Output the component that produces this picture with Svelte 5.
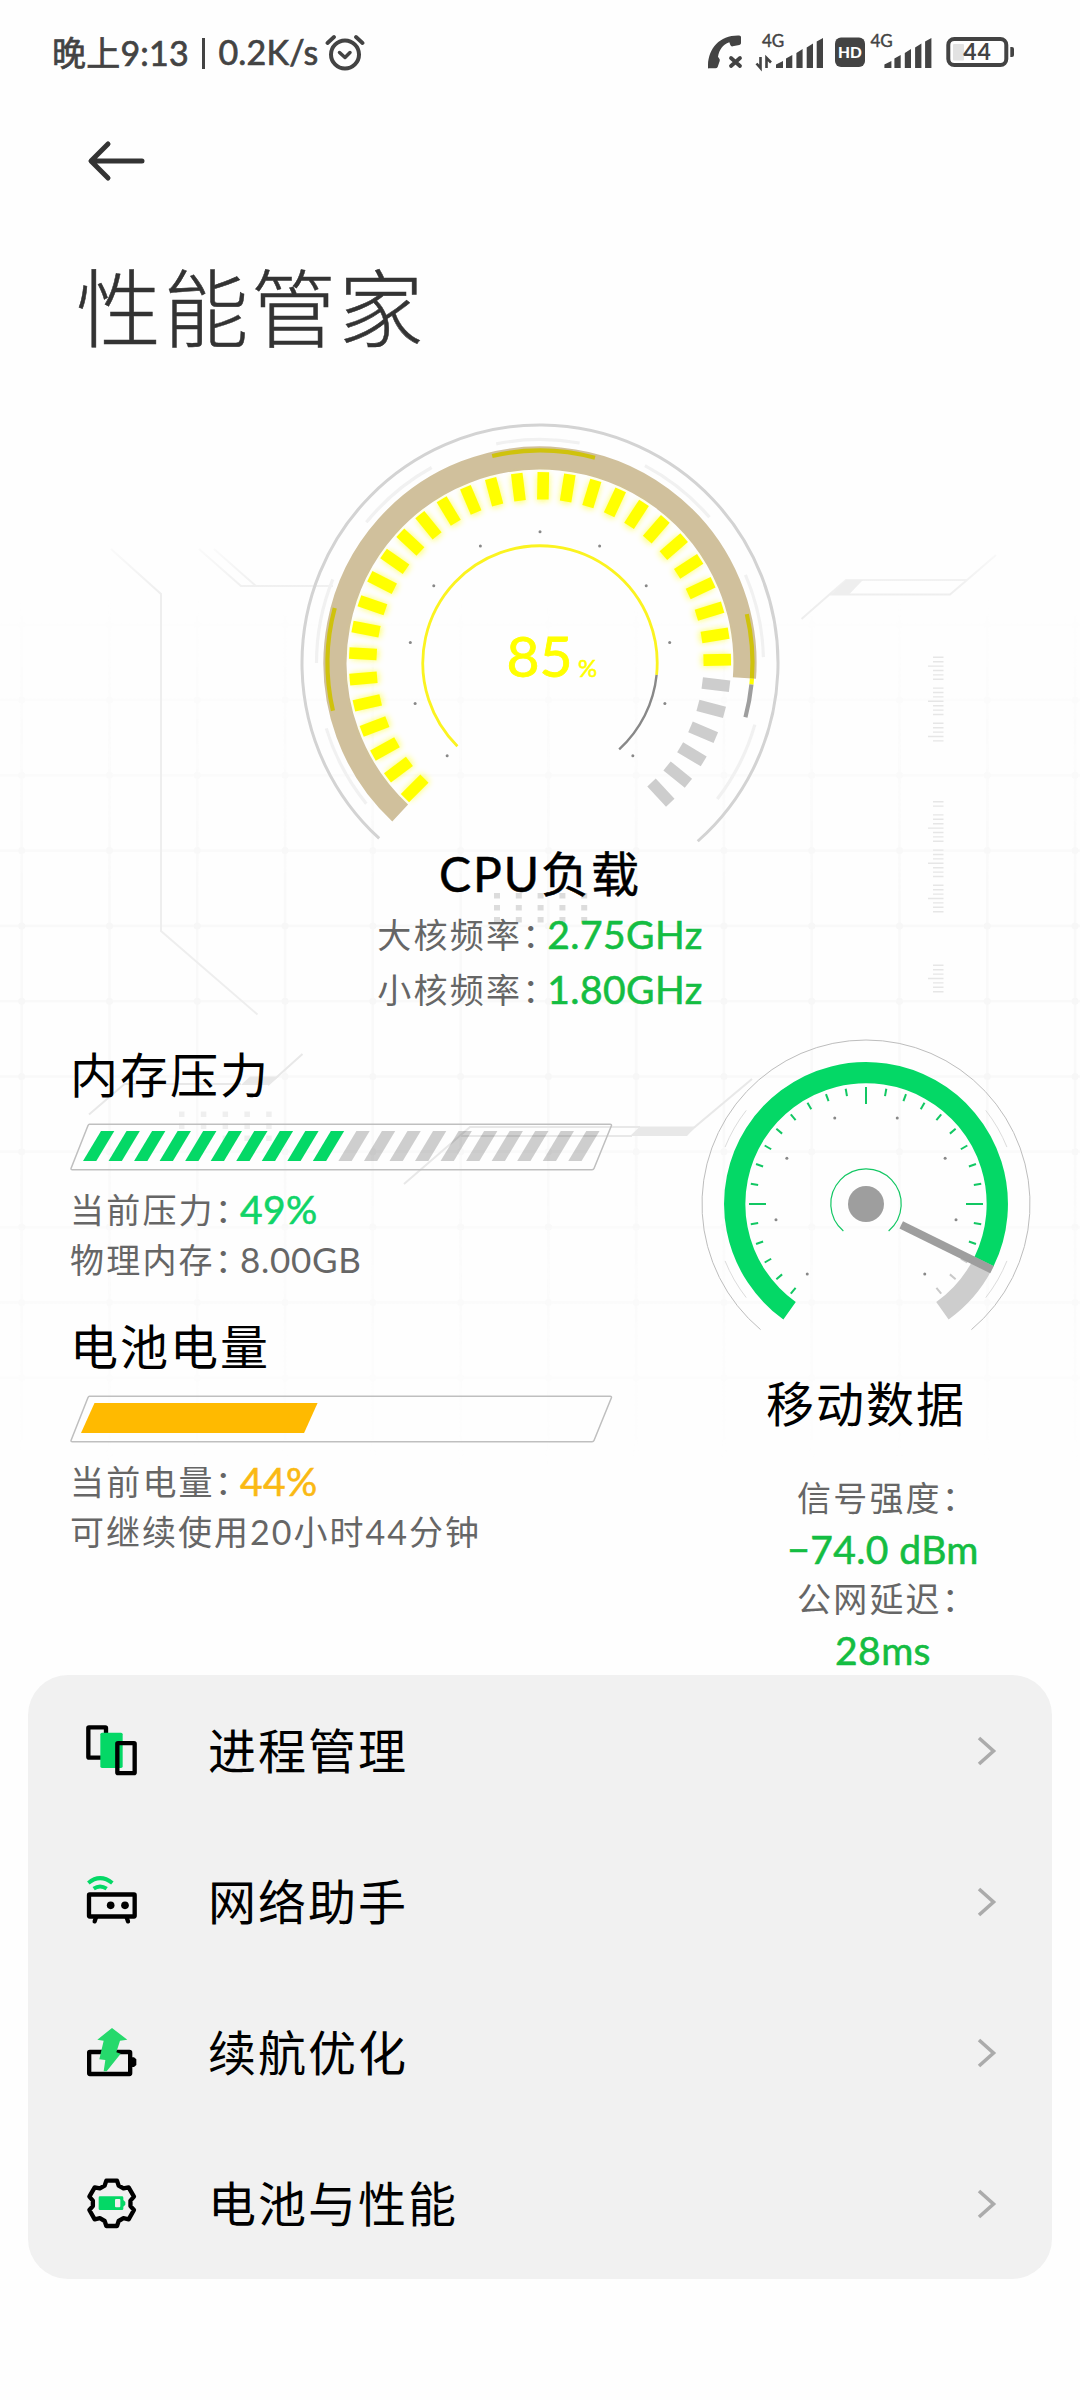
<script lang="ts">
  const cpuLoad = 85;
  const memory = 49;
  const battery = 44;

  const point = (r: number, deg: number) => {
    const a = (deg * Math.PI) / 180;
    return `${(r * Math.cos(a)).toFixed(2)} ${(r * Math.sin(a)).toFixed(2)}`;
  };

  const arc = (r: number, from: number, to: number) =>
    `M${point(r, from)}A${r} ${r} 0 ${to - from > 180 ? 1 : 0} 1 ${point(r, to)}`;

  const spoke = (r1: number, r2: number, deg: number) =>
    `M${point(r1, deg)}L${point(r2, deg)}`;

  const range = (n: number) => Array.from({ length: n }, (_, i) => i);

  // cpu gauge
  const cpuTicks = range(35).map((i) => 135 + i * 8);
  const cpuDots = range(11).map((i) => -225 + i * 27);
  const faintArcs = [
    [141, 163],
    [180, 202],
    [219, 241],
    [258.7, 280.2],
    [298, 319.3],
    [336.8, 358.5],
    [16, 37.5],
  ];

  // network gauge
  const needle = 26;
  const netTicks = range(29).map((i) => -230 + i * 10);
  const netDots = [-230, -190, -150, -110, -70, -30, 10, 50];
  const netFaint = [
    [142, 158],
    [202, 218],
    [322, 338],
    [22, 38],
  ];

  const gridX = range(13).map((i) => 21.7 + i * 87.78);
  const gridY = range(12).map((i) => 624.7 + i * 75.3);

  // [first y, number of marks, offset of the first long mark]
  const rulers = [
    [657.3, 20, 2],
    [801.7, 26, 6],
    [965.3, 7, 3],
  ];
  const rulerPath = rulers
    .map(([y, n, long]) =>
      range(n)
        .filter((i) => (i - long + 16) % 8 !== 4)
        .map((i) => `M${(i - long) % 8 === 0 ? 928 : 933} ${(y + i * 4.4).toFixed(1)}H943.5`)
        .join("")
    )
    .join("");

  const stripes = range(20).map((i) => 13 + i * 25.54);
  const gear =
    range(6)
      .map((k) => {
        const a = (k * Math.PI) / 3;
        return [[-21, -53], [-16, -68], [16, -68], [21, -53]]
          .map(([x, y]) => `${(x * Math.cos(a) - y * Math.sin(a)).toFixed(1)} ${(x * Math.sin(a) + y * Math.cos(a)).toFixed(1)}`)
          .join("L");
      })
      .join("L");

  const menu = [
    { id: "process", label: "进程管理" },
    { id: "network", label: "网络助手" },
    { id: "endurance", label: "续航优化" },
    { id: "power", label: "电池与性能" },
  ];
</script>

<div class="page">
  <svg class="backdrop" viewBox="0 0 1080 2400">
    <defs>
      <linearGradient id="fade" x1="0" y1="590" x2="0" y2="1470" gradientUnits="userSpaceOnUse">
        <stop offset="0" stop-color="#fff" stop-opacity="0" />
        <stop offset="0.35" stop-color="#fff" />
        <stop offset="0.6" stop-color="#fff" />
        <stop offset="1" stop-color="#fff" stop-opacity="0" />
      </linearGradient>
      <linearGradient id="fadeTop" x1="0" y1="545" x2="0" y2="595" gradientUnits="userSpaceOnUse">
        <stop offset="0" stop-color="#eee" stop-opacity="0.2" />
        <stop offset="1" stop-color="#eee" />
      </linearGradient>
      <mask id="gridMask" maskUnits="userSpaceOnUse" x="0" y="590" width="1080" height="880">
        <rect y="590" width="1080" height="880" fill="url(#fade)" />
      </mask>
    </defs>
    <g mask="url(#gridMask)" stroke="#f9f9f9" stroke-width="2.6">
      {#each gridX as x}
        <path d="M{x} 600V1470" />
      {/each}
      {#each gridY as y}
        <path d="M0 {y}H1080" />
        {#each gridX as x}
          <circle cx={x} cy={y} r="3.5" fill="#f7f7f7" stroke="none" />
        {/each}
      {/each}
    </g>
    <g fill="none" stroke="url(#fadeTop)" stroke-width="2">
      <path d="M111 549L161 594V931L257.5 1014.5" />
      <path d="M199 549L241 586L333 586.1M214 549L256 586" />
      <path d="M801.5 619L846 580L967 580.1L996 555M830 594.5L950 594.6L967 580" />
    </g>
    <path d="M831 594.5L846 580H863L849 594.5Z" fill="#eee" />
    <path d={rulerPath} stroke="#e6e6e6" stroke-width="1.4" />
    <g fill="#dcdcdc">
      {#each range(15) as i}
        <rect x={494 + (i % 5) * 21.8} y={893 + Math.floor(i / 5) * 12} width="6" height="5.5" />
      {/each}
    </g>
    <g fill="#efefef">
      {#each range(15) as i}
        <rect x={179 + (i % 5) * 21.8} y={1111.5 + Math.floor(i / 5) * 12} width="5.5" height="5.5" />
      {/each}
    </g>
    <g fill="none" stroke="#e8e8e8" stroke-width="2">
      <path d="M89 1114.5L124.5 1084H241M268 1085L302.5 1054" />
      <path d="M404 1184L470 1127H640M461 1136H632" />
      <path d="M690 1131L752 1079" />
    </g>
    <path d="M241 1085L250 1076.5H279L268 1085ZM630 1136L640 1126.5H696L687 1136Z" fill="#e8e8e8" />
  </svg>

  <header class="status">
    <div class="status-left">
      <span class="status-text">晚上9:13<i></i>0.2K/s</span>
      <svg class="alarm" viewBox="0 0 40 38">
        <g fill="none" stroke="#434343" stroke-linecap="round" stroke-linejoin="round">
          <circle cx="20" cy="21.5" r="14" stroke-width="4" />
          <path d="M14.5 19.5L20 24.5L25 19.5" stroke-width="3.5" />
          <path d="M2.5 10L9 4M37.5 10L31 4" stroke-width="3.8" />
        </g>
      </svg>
    </div>
    <svg class="status-icons" viewBox="0 -10 310 50">
      <g fill="#434343">
        <path
          transform="scale(.3333) translate(-84 -75)"
          d="M84 174C82 118 118 74 180 77Q183 77 183 82V100Q183 104 178 105L158 109Q153 110 151 105L148 97C128 104 118 120 114 140L119 148Q120 152 118 156L113 171Q111 175 106 175H88Q84 176 84 174Z"
        />
        <path d="M23 23L32 31M32 23L23 31" stroke="#434343" stroke-width="3.8" stroke-linecap="round" />
        <path d="M52.5 22V33L48.5 28.5M58.5 33V23L63 27.5" fill="none" stroke="#434343" stroke-width="2.6" />
        <text class="net" x="54" y="12.3">4G</text>
        <text class="net" x="162.5" y="12.3">4G</text>
        {#each [0, 108.4] as x}
          <path
            transform="translate({x} 0)"
            d="M68 33V29.5L75 26V33ZM78 33V23.5L84.3 20V33ZM88.4 33V18L94.6 14V33ZM98.7 33V12.5L105 8.5V33ZM108.7 33V6.5L115 3V33Z"
          />
        {/each}
        <rect x="127" y="2.5" width="30" height="29.5" rx="6" />
        <text class="hd" x="142" y="23">HD</text>
        <rect x="245" y="9" width="11" height="16.5" rx="1" fill="#e2e2e2" />
        <rect x="240.3" y="4" width="58" height="26" rx="6" fill="none" stroke="#434343" stroke-width="4" />
        <path d="M302.3 12H304Q306 12 306 14V20Q306 22 304 22H302.3Z" />
        <text class="level" x="269.5" y="25.2">{battery}</text>
      </g>
    </svg>
  </header>

  <nav>
    <svg class="back" viewBox="0 0 60 42">
      <path d="M55 21H5M21 4L4 21L21 38" fill="none" stroke="#333" stroke-width="5" stroke-linecap="round" stroke-linejoin="round" />
    </svg>
    <h1>性能管家</h1>
  </nav>

  <section class="cpu">
    <svg class="cpu-gauge" viewBox="-240 -240 480 422">
      <defs>
        <filter id="glow" x="-20%" y="-20%" width="140%" height="140%">
          <feGaussianBlur stdDeviation="3" />
        </filter>
      </defs>
      <g fill="none">
        <path d={arc(238, 132.5, 408.5)} stroke="#d3d3d3" stroke-width="3" />
        {#each faintArcs as [a, b]}
          <path d={arc(223.5, a, b)} stroke="#f1f1f1" stroke-width="3.2" />
        {/each}
        <path d={arc(205, 133, 364.2)} stroke="#d0c09c" stroke-width="23.2" />
        {#each [[167, 195], [257, 285], [346.7, 364.2]] as [a, b]}
          <path d={arc(212.5, a, b)} stroke="#cfc20d" stroke-width="4.2" />
        {/each}
        <path d={arc(212.5, 364.2, 365.8)} stroke="#ff0" stroke-width="4.2" />
        <path d={arc(212.5, 365.8, 374.8)} stroke="#9e9e9e" stroke-width="4.2" />
        <g stroke="#ff0" stroke-width="12" opacity="0.6" filter="url(#glow)">
          {#each cpuTicks.slice(0, 29) as a}
            <path d={spoke(162, 189, a)} />
          {/each}
        </g>
        {#each cpuTicks as a, i}
          <path d={spoke(163.5, 191, a)} stroke={i < 29 ? "#ff0" : "#cdcdcd"} stroke-width="11.6" />
        {/each}
        <path d={arc(117.2, 134.8, 365.8)} stroke="#fbf320" stroke-width="2.8" />
        <path d={arc(117.2, 365.8, 407.5)} stroke="#888" stroke-width="2.4" />
      </g>
      {#each cpuDots as a}
        <circle r="1.5" transform="translate({point(131.3, a)})" fill="#888" />
      {/each}
      <text class="load" x="-33.5" y="14.3">{cpuLoad}</text>
      <text class="load-unit" x="38" y="14.3">%</text>
    </svg>
    <h2>CPU负载</h2>
    <p class="freq"><span class="label">大核频率：</span><b class="green">2.75GHz</b></p>
    <p class="freq"><span class="label">小核频率：</span><b class="green">1.80GHz</b></p>
  </section>

  <section class="panels">
    <div class="meters">
      <div class="meter">
        <h2>内存压力</h2>
        <svg class="bar" viewBox="0 0 544 48">
          <path d="M19.5 1.2H540Q542 1.2 541.3 3L524 45.5Q523.5 46.8 522 46.8H2.5Q.5 46.8 1.2 45L18 2.5Q18.5 1.2 19.5 1.2Z" fill="none" stroke="#bfbfbf" stroke-width="1.5" />
          {#each stripes as x, i}
            <path d="M{x} 38L{x + 18} 8H{x + 31.3}L{x + 13.3} 38Z" fill={i * 5 < memory ? "#04d866" : "rgba(0, 0, 0, .19)"} />
          {/each}
        </svg>
        <p><span class="label">当前压力：</span><b class="bright">{memory}%</b></p>
        <p><span class="label">物理内存：</span><span class="size">8.00GB</span></p>
      </div>
      <div class="meter">
        <h2>电池电量</h2>
        <svg class="bar" viewBox="0 0 544 48">
          <path d="M19.5 1.2H540Q542 1.2 541.3 3L524 45.5Q523.5 46.8 522 46.8H2.5Q.5 46.8 1.2 45L18 2.5Q18.5 1.2 19.5 1.2Z" fill="none" stroke="#bfbfbf" stroke-width="1.5" />
          <path d="M11 38L24.5 8H{24.5 + battery * 5.07}L{11 + battery * 5.07} 38Z" fill="#ffba00" />
        </svg>
        <p><span class="label">当前电量：</span><b class="amber">{battery}%</b></p>
        <p class="label remain">可继续使用20小时44分钟</p>
      </div>
    </div>

    <div class="network">
      <svg class="net-gauge" viewBox="-166 -166 332 300">
        <g fill="none">
          <path d={arc(164, 130, 410)} stroke="#bdbdbd" />
          {#each netFaint as [a, b]}
            <path d={arc(152, a, b)} stroke="#dcdcdc" />
          {/each}
          <path d={arc(131.3, needle, 54.4)} stroke="#cdcdcd" stroke-width="21.3" />
          <path d={arc(131.3, 125.6, 360 + needle)} stroke="#04d866" stroke-width="21.3" />
          {#each netTicks as a}
            <path
              d={spoke(a % 90 === 0 ? 100 : 109.5, 117, a)}
              stroke={a < needle ? "#12c763" : "#c9c9c9"}
              stroke-width="2"
            />
          {/each}
          <path d={arc(35.2, 130, 410)} stroke="#12c763" stroke-width="1.2" />
          <path d="M35.2 20.8L126 65.7" stroke="#9e9e9e" stroke-width="8" />
        </g>
        {#each netDots as a}
          <circle r="1.5" transform="translate({point(91.4, a)})" fill="#888" />
        {/each}
        <circle r="18" fill="#9e9e9e" />
      </svg>
      <h2>移动数据</h2>
      <dl>
        <dt class="label">信号强度：</dt>
        <dd class="green">−74.0 dBm</dd>
        <dt class="label">公网延迟：</dt>
        <dd class="green">28ms</dd>
      </dl>
    </div>
  </section>

  <ul class="menu">
    {#each menu as item}
      <li>
        <svg class="icon" viewBox="0 0 153 153">
          {#if item.id === "process"}
            <rect x="7" y="7" width="53" height="91" rx="2" fill="none" stroke="#000" stroke-width="13" />
            <rect x="43" y="23" width="67" height="106" rx="5" fill="#04d866" />
            <rect x="94" y="54.5" width="52" height="90" rx="2" fill="none" stroke="#000" stroke-width="13" />
          {:else if item.id === "network"}
            <g fill="none" stroke="#04d866" stroke-width="12">
              <path d="M7 21Q42 -8 79 21" />
              <path d="M23 38Q42 25 62 38" />
            </g>
            <rect x="9" y="55.5" width="137" height="66" rx="2" fill="none" stroke="#000" stroke-width="13" />
            <path d="M30 124L26 136M122 124L126 136" stroke="#000" stroke-width="13" stroke-linecap="round" />
            <circle cx="74" cy="88" r="11.5" />
            <circle cx="117" cy="88" r="11.5" />
          {:else if item.id === "endurance"}
            <rect x="9.5" y="75" width="123" height="66" rx="2" fill="none" stroke="#000" stroke-width="13" />
            <path d="M138 91H144L151 97V114L144 120H138Z" />
            <path d="M78 3L124 38L102 41L91 76L104 80L62 133H53L58 99L40 97L53 41L34 38Z" fill="#26d96c" />
          {:else}
            <path transform="translate(77 76)" d="M{gear}Z" fill="none" stroke="#000" stroke-width="13" stroke-linejoin="round" />
            <path d="M42 55H108Q112 55 112 59V66L118 72V80L112 86V92Q112 96 108 96H42Q38 96 38 92V59Q38 55 42 55Z" fill="#04d866" />
            <rect x="87" y="63" width="16" height="25" rx="3" fill="#f1f1f1" />
          {/if}
        </svg>
        <span>{item.label}</span>
        <svg class="chevron" viewBox="0 0 20 30">
          <path d="M2 2L16.5 15L2 28" fill="none" stroke="#ababab" stroke-width="3.6" />
        </svg>
      </li>
    {/each}
  </ul>
</div>

<style>
  :global(body) {
    margin: 0;
    background: #fefefe;
  }

  .page {
    position: relative;
    width: 1080px;
    height: 2400px;
    overflow: hidden;
    background: #fefefe;
    color: #000;
    font-family: Lato, "Noto Sans CJK SC", sans-serif;
  }

  .page > :not(.backdrop) {
    position: relative;
  }

  .backdrop {
    position: absolute;
    inset: 0;
    width: 1080px;
    height: 2400px;
  }

  svg {
    display: block;
    flex: none;
  }

  h1,
  h2,
  p,
  ul,
  dl,
  dd {
    margin: 0;
    padding: 0;
  }

  .status {
    display: flex;
    justify-content: space-between;
    align-items: flex-start;
    height: 105px;
    padding: 0 62px 0 52px;
    box-sizing: border-box;
  }

  .status-left {
    display: flex;
    align-items: center;
    height: 106px;
  }

  .status-text {
    display: flex;
    align-items: center;
    padding-bottom: 4px;
    font-size: 34px;
    letter-spacing: 0.2px;
    color: #434343;
    -webkit-text-stroke: 0.7px #434343;
  }

  .status-text i {
    width: 3.5px;
    height: 31px;
    margin: 4px 13px 0 13px;
    background: #434343;
  }

  .alarm {
    width: 40px;
    height: 38px;
    margin: -2px 0 0 7px;
  }

  .status-icons {
    width: 310px;
    height: 50px;
    margin-top: 25px;
  }

  .net {
    font-size: 17px;
    stroke: #434343;
    stroke-width: 0.4px;
  }

  .hd {
    font-size: 15.5px;
    font-weight: 900;
    fill: #fff;
    text-anchor: middle;
  }

  .level {
    font-size: 23px;
    font-weight: 700;
    letter-spacing: 0.8px;
    text-anchor: middle;
  }

  nav {
    height: 318px;
  }

  .back {
    width: 60px;
    height: 42px;
    padding: 35px 0 0 87px;
  }

  h1 {
    padding: 66px 0 0 76px;
    font-size: 85px;
    line-height: 120px;
    font-weight: 300;
    letter-spacing: 2.5px;
    color: #333;
    -webkit-text-stroke: 0.5px #333;
  }

  h2 {
    font-size: 48px;
    line-height: 50px;
    font-weight: 400;
    letter-spacing: 2px;
  }

  .cpu {
    display: flex;
    flex-direction: column;
    align-items: center;
    height: 603px;
  }

  .cpu-gauge {
    width: 480px;
    height: 422px;
  }

  .load {
    font-size: 57px;
    fill: #ff0;
    stroke: #ff0;
    stroke-width: 0.8px;
  }

  .load-unit {
    font-size: 24px;
    fill: #ff0;
    stroke: #ff0;
    stroke-width: 0.6px;
  }

  .cpu h2 {
    margin-top: 4px;
    -webkit-text-stroke: 0.5px #000;
  }

  p {
    display: flex;
    align-items: center;
    line-height: 49px;
  }

  .freq {
    line-height: 55px;
  }

  .cpu h2 + .freq {
    margin-top: 8px;
  }

  .label,
  .size {
    font-size: 34px;
    letter-spacing: 2.2px;
    color: #666;
    font-feature-settings: "halt";
  }

  p .label + * {
    margin-left: 6px;
  }

  .size {
    font-size: 35px;
    letter-spacing: 0.7px;
  }

  .green,
  .bright,
  .amber {
    font-size: 39px;
    font-weight: 400;
    letter-spacing: 0.4px;
    -webkit-text-stroke: 0.6px currentColor;
  }

  .green {
    color: #14bd42;
  }

  .bright {
    color: #10d468;
  }

  .amber {
    color: #fab913;
  }

  .panels {
    display: flex;
    height: 649px;
  }

  .meters {
    width: 614px;
    padding: 24px 0 0 70px;
  }

  .meter {
    height: 272px;
  }

  .meter p {
    line-height: 49.5px;
  }

  .bar {
    width: 544px;
    height: 48px;
    margin: 23px 0 14px;
  }

  .remain {
    letter-spacing: 2px;
  }

  .network {
    display: flex;
    flex-direction: column;
    align-items: center;
    width: 364px;
    padding-top: 12px;
  }

  .net-gauge {
    width: 332px;
    height: 300px;
  }

  .network h2 {
    margin-top: 41px;
  }

  dl {
    width: 360px;
    margin-top: 44px;
    text-align: center;
    line-height: 50.6px;
  }

  dt {
    padding-left: 26px;
  }

  dd {
    padding-left: 34px;
    letter-spacing: 0.9px;
  }

  .menu {
    display: flex;
    flex-direction: column;
    width: 1024px;
    height: 604px;
    margin-left: 28px;
    border-radius: 40px;
    background: #f1f1f1;
    list-style: none;
  }

  .menu li {
    display: flex;
    flex: 1;
    align-items: center;
    padding: 0 55px 0 58px;
    font-size: 48px;
    line-height: 60px;
    letter-spacing: 2px;
  }

  .menu span {
    flex: 1;
    padding: 1px 0 0 71px;
  }

  .icon {
    width: 51px;
    height: 51px;
  }

  .chevron {
    width: 20px;
    height: 30px;
  }
</style>
